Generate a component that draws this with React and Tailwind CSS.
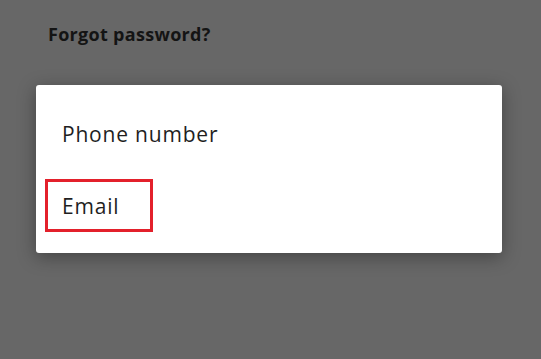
export default function App() {
  return (
    <div className="w-[541px] h-[359px] bg-[#676767] overflow-hidden font-['Open_Sans','Lato',sans-serif]">
      {/* Page behind the overlay */}
      <div className="pl-[48px] pt-[21px]">
        <h1 className="text-[18px] leading-[26px] font-bold text-[#141414] tracking-[0.3px]">
          Forgot password?
        </h1>
      </div>

      {/* Dialog */}
      <div className="ml-[36px] mt-[38px] w-[466px] h-[168px] bg-white rounded-[3px] shadow-[0_4px_18px_rgba(0,0,0,0.35)]">
        <div className="pt-[35px] pl-[26px] text-[21px] leading-[28px] text-[#1f1f1f] tracking-[0.8px]">
          Phone number
        </div>
        <div className="relative mt-[44px] pl-[26px] text-[21px] leading-[28px] text-[#1f1f1f] tracking-[0.8px]">
          Email
          <div className="absolute left-[9px] top-[-13px] w-[108px] h-[53px] border-[3px] border-[#e3202b]" />
        </div>
      </div>
    </div>
  );
}
